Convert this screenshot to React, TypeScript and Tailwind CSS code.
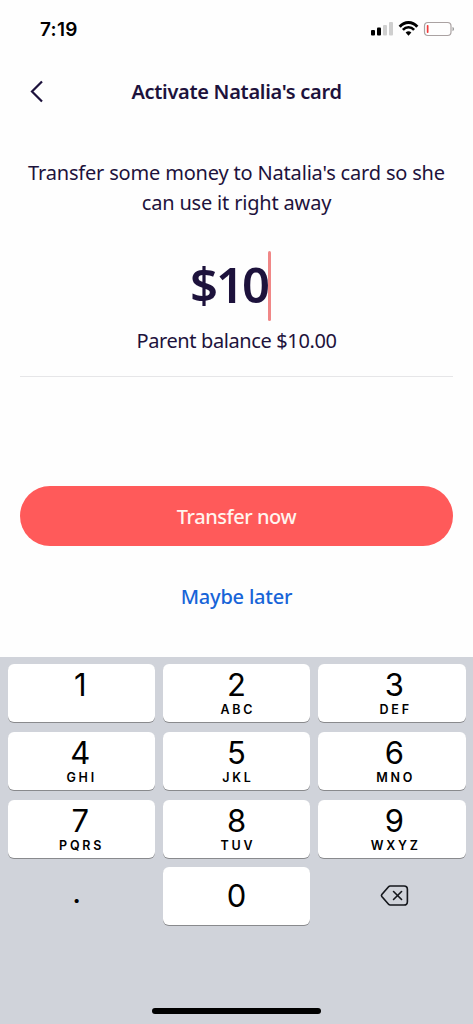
const KEYS = [
  { digit: '1', letters: '', inset: 'pr-[2px]' },
  { digit: '2', letters: 'ABC', inset: '' },
  { digit: '3', letters: 'DEF', inset: 'pl-[5px]' },
  { digit: '4', letters: 'GHI', inset: 'pr-[2px]' },
  { digit: '5', letters: 'JKL', inset: '' },
  { digit: '6', letters: 'MNO', inset: 'pl-[5px]' },
  { digit: '7', letters: 'PQRS', inset: 'pr-[2px]' },
  { digit: '8', letters: 'TUV', inset: '' },
  { digit: '9', letters: 'WXYZ', inset: 'pl-[5px]' },
];

function StatusBar() {
  return (
    <div className="flex h-[58px] items-center justify-between pr-[17px] pl-10 font-['Inter',sans-serif] text-black">
      <span className="pt-px text-[19px] leading-6 font-semibold tracking-[0.3px]">7:19</span>
      <svg width="85" height="18" viewBox="0 0 85 18" fill="none">
        <rect x="0" y="10" width="4" height="5.500" rx="1" fill="#000" />
        <rect x="6" y="7.500" width="4" height="8" rx="1" fill="#000" />
        <rect x="12" y="5" width="4" height="10.500" rx="1" fill="#cfcfcf" />
        <rect x="18" y="2" width="4" height="13.500" rx="1" fill="#cfcfcf" />
        <path d="M28.700 6.700C33.600 1 41.400 1 46.300 6.700" stroke="#000" strokeWidth="2.900" />
        <path d="M31.900 9.900C35.100 6.400 39.900 6.400 43.100 9.900" stroke="#000" strokeWidth="2.600" />
        <path d="M34.600 12.600Q37.500 9.700 40.400 12.600L37.500 15.700Z" fill="#000" />
        <rect x="53.500" y="2.500" width="26.500" height="13" rx="3.500" stroke="#aaa2a2" strokeWidth="1.200" />
        <rect x="55.800" y="5" width="1.700" height="8" rx=".7" fill="#f13b3b" />
        <path d="M81.500 7v4.200c2-.7 2-3.500 0-4.200Z" fill="#999" />
      </svg>
    </div>
  );
}

function Header() {
  return (
    <header className="grid h-[66px] grid-cols-[80px_1fr_80px] items-center">
      <button aria-label="Back" className="pl-[29px]">
        <svg width="16" height="24" viewBox="0 0 16 24" fill="none" stroke="#1d123c" strokeWidth="2.200">
          <path d="M13 2.500 3 12.500 13 22.500" />
        </svg>
      </button>
      <h1 className="pt-[2px] text-center text-[20px] leading-7 font-semibold tracking-[-0.300px] whitespace-nowrap">Activate Natalia's card</h1>
    </header>
  );
}

function Keypad() {
  return (
    <section className="flex h-[367px] flex-col bg-[#d0d3da] px-[7.500px] pt-[7px] font-['Inter',sans-serif] text-black">
      <div className="grid auto-rows-[58px] grid-cols-3 gap-x-[7.750px] gap-y-[9.800px]">
        {KEYS.map((key) => (
          <button
            key={key.digit}
            className={`flex flex-col items-center rounded-[6px] bg-white pt-[3px] shadow-[0_1px_0_#898a8d] ${key.inset}`}
          >
            <span className="text-[31px] leading-[36px] font-normal">{key.digit}</span>
            <span className="-mr-[2.800px] text-[12.500px] leading-[13px] font-semibold tracking-[2.800px]">{key.letters}</span>
          </button>
        ))}
        <button className="flex items-center justify-center pr-[9px]" aria-label="Decimal point">
          <span className="pb-[5px] text-[26px] leading-8 font-semibold">.</span>
        </button>
        <button className="flex items-center justify-center rounded-[6px] bg-white text-[31px] leading-[36px] font-normal shadow-[0_1px_0_#898a8d]">
          0
        </button>
        <button aria-label="Delete" className="flex items-center justify-center pb-[2px] pl-[6px]">
          <svg width="29" height="21" viewBox="0 0 30 22" fill="none" stroke="#15171c" strokeWidth="1.700" strokeLinejoin="round" strokeLinecap="round">
            <path d="M10.500 1H25q3.500 0 3.500 3.500v13q0 3.500-3.500 3.500H10.500q-1 0-1.700-.8L1.700 12q-.8-1 0-2l7.100-8.200Q9.500 1 10.500 1Z" />
            <path d="m14 6.800 8.400 8.400m0-8.400-8.400 8.400" />
          </svg>
        </button>
      </div>
      <div className="mt-auto mb-[10px] h-[6px] w-[169px] self-center rounded-full bg-black" />
    </section>
  );
}

export default function App() {
  return (
    <main className="flex h-[1024px] w-[473px] flex-col overflow-hidden bg-[#fefefe] font-['Noto_Sans',sans-serif] text-[#1d123c]">
      <StatusBar />
      <Header />
      <section className="mx-5 flex h-[253px] flex-col items-center border-b border-[#e6e6e8] pt-[34px]">
        <p className="text-center text-[20px] leading-[30px] tracking-[-0.180px] whitespace-nowrap">
          Transfer some money to Natalia's card so she
          <br />
          can use it right away
        </p>
        <div className="mt-[33px] mr-[12px] flex h-[70px] items-center">
          <span className="pb-[4px] text-[49px] leading-[60px] font-semibold tracking-[-2px]">$10</span>
          <span className="h-[70px] w-[3px] rounded-full bg-[#f08787]" />
        </div>
        <p className="mt-[5px] text-[20px] leading-[30px] tracking-[-0.380px]">Parent balance $10.00</p>
      </section>
      <section className="flex h-[280px] flex-col px-5 pt-[109px]">
        <button className="h-[60px] rounded-full bg-[#ff5a5a] pt-[2px] text-[20px] font-medium tracking-[-0.450px] text-[#fff4ee]">Transfer now</button>
        <button className="mt-[36px] h-[30px] text-[20px] font-medium tracking-[-0.200px] text-[#1764d8]">Maybe later</button>
      </section>
      <Keypad />
    </main>
  );
}
